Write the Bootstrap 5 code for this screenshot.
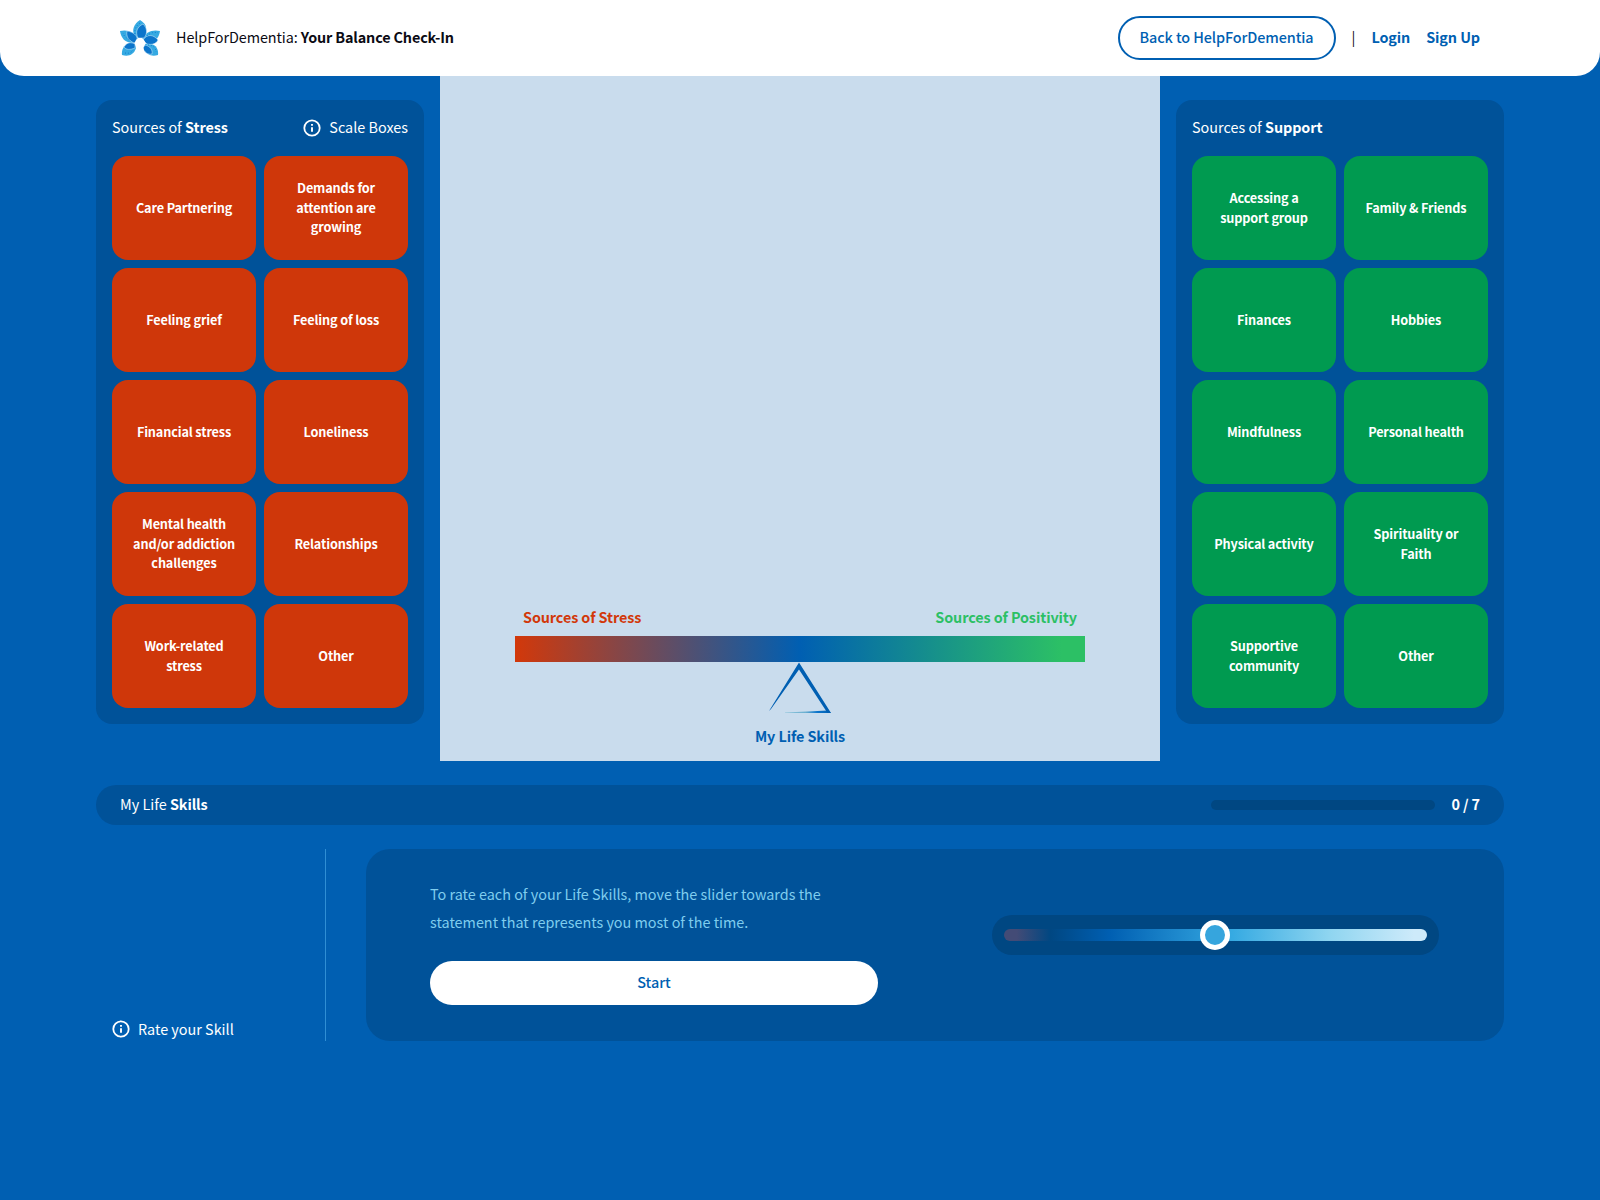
<!DOCTYPE html>
<html lang="en">

<head>
    <meta charset="UTF-8">
    <meta name="viewport" content="width=device-width, initial-scale=1">
    <title>HelpForDementia: Your Balance Check-In</title>
    <link href="https://cdn.jsdelivr.net/npm/bootstrap@5.3.3/dist/css/bootstrap.min.css" rel="stylesheet">
    <style>
        body {
            font-family: "Noto Sans CJK SC", "Noto Sans", sans-serif;
            font-size: 14.4px;
            line-height: 24px;
            background: #005fb2;
            color: #fff;
        }

        button {
            font-family: inherit;
        }

        strong,
        .fw-bold {
            letter-spacing: -.1px;
        }

        /* the font sits low in its line box */
        .lift {
            padding-bottom: 2px;
        }

        .site-header {
            height: 76px;
            padding: 0 120px;
            border-radius: 0 0 24px 24px;
            background: #fff;
            color: #0b0b14;
        }

        .site-title {
            letter-spacing: -.08px;
        }

        .site-title strong {
            letter-spacing: -.14px;
        }

        .site-header a {
            color: #005fb2;
            text-decoration: none;
        }

        .site-header .back-btn {
            width: 218px;
            height: 44px;
            border: 2px solid #005fb2;
            font-weight: 500;
            letter-spacing: -.1px;
        }

        .page-wrap {
            width: 1408px;
        }

        .source-panel {
            width: 328px;
            height: 624px;
            margin-top: 24px;
            padding: 16px;
            border-radius: 16px;
            background: #005299;
        }

        .source-title {
            height: 24px;
            margin-bottom: 16px;
        }

        .box-grid {
            display: grid;
            grid-template-columns: 144px 144px;
            grid-auto-rows: 104px;
            gap: 8px;
        }

        .source-box {
            padding: 0 16px 1px;
            border: 0;
            border-radius: 16px;
            color: #fff;
            font-size: 12.7px;
            line-height: 19.6px;
            font-weight: 700;
            letter-spacing: -.15px;
        }

        .stress .source-box {
            background: #cf370a;
        }

        .support .source-box {
            background: #009a50;
        }

        .scale-area {
            width: 720px;
            height: 685px;
            padding: 529px 75px 0;
            background: #c9dced;
        }

        .balance-bar {
            height: 26px;
            margin-top: 7px;
            background: linear-gradient(90deg, #d2380a, #005fb2 50%, #2cc065 96%);
        }

        .text-stress {
            color: #d2380a;
        }

        .text-positive {
            color: #2cc065;
        }

        .text-skill {
            margin-top: 11px;
            color: #005fb2;
        }

        .skills-bar {
            height: 40px;
            margin-top: 24px;
            padding: 0 24px;
            background: #005299;
        }

        .skills-bar .progress {
            width: 224px;
            height: 10px;
            border-radius: 5px;
            background: #004782;
        }

        .rate-side {
            width: 230px;
            padding-left: 16px;
            border-right: 1px solid #2f8ed4;
        }

        .rate-side .lift {
            margin-bottom: -2px;
        }

        .rate-row {
            height: 192px;
            margin-top: 24px;
        }

        .rate-panel {
            width: 1138px;
            padding: 0 65px 0 64px;
            border-radius: 24px;
            background: #005299;
        }

        .rate-copy {
            width: 448px;
            padding-top: 31px;
        }

        .rate-text {
            margin-bottom: 25px;
            color: #7fcdee;
            line-height: 28px;
        }

        .start-btn {
            height: 44px;
            padding: 0 0 2px;
            border: 0;
            background: #fff;
            color: #005fb2;
            font-weight: 500;
        }

        .rate-slider {
            width: 447px;
            height: 40px;
            margin-top: 66px;
            padding: 0 12px;
            background: #004782;
        }

        .rate-slider input {
            appearance: none;
            display: block;
            width: 100%;
            height: 12px;
            margin: 0;
            border-radius: 6px;
            background: linear-gradient(90deg, #434b76 3%, #004782 11%, #005fb2 25%, #36aae2 54%, #8fd5f0 77%, #cdeafa 97%);
        }

        .rate-slider input::-webkit-slider-thumb {
            appearance: none;
            width: 30px;
            height: 30px;
            border: 5px solid #fff;
            border-radius: 50%;
            background: #36a5dd;
        }
    </style>
</head>

<body>

    <svg class="d-none">
        <symbol id="info" viewBox="0 0 18 18">
            <circle cx="9" cy="9" r="7.7" fill="none" stroke="currentColor" stroke-width="1.8" />
            <path d="M9 8.2v4.6M9 5v1.8" stroke="currentColor" stroke-width="1.9" />
        </symbol>
    </svg>

    <header class="site-header d-flex align-items-center">
        <svg width="40" height="36" viewBox="0 0 40 36">
            <g fill="#36aae2">
                <path d="M20 0C14 4 11 10 15 17L21 18C29 11 27 4 20 0z" />
                <path d="M0 11C7 9 15 12 18 19L13 23C5 23 1 18 0 11z" />
                <path d="M40 11C33 9 25 12 22 19L27 23C35 23 39 18 40 11z" />
                <path d="M2 35C1 28 6 22 15 24L16 28C14 35 8 37 2 35z" />
                <path d="M38 35C39 28 34 22 25 24L24 28C26 35 32 37 38 35z" />
            </g>
            <g fill="#0c75cb" stroke="#d8effa" stroke-width=".5">
                <path d="M23 4C17 7 15 12 18 18L24 18C28 13 27 8 23 4z" />
                <path d="M7 11C13 12 18 15 17 21L14 23C8 20 6 16 7 11z" />
                <path d="M38 20C33 14 27 14 23 20L27 24C32 25 36 24 38 20z" />
                <path d="M4 27C7 22 11 22 15 24L15 28C10 30 6 30 4 27z" />
                <path d="M32 34C33 30 30 26 25 25L23 28C24 32 28 35 32 34z" />
            </g>
            <g fill="none" stroke="#0c75cb" stroke-width=".9" stroke-dasharray=".9 2">
                <path d="M15 14C14 9 17 5 20 3M12 20C6 19 4 16 3 13M27 16C31 12 35 12 38 13M5 33C9 34 12 32 13 30M28 25C33 25 36 28 36 32" />
            </g>
            <circle cx="20" cy="23" r="5" fill="#fff" />
            <path d="M17 26h6l2 10h-10z" fill="#fff" />
        </svg>
        <div class="site-title lift ms-3">HelpForDementia: <strong>Your Balance Check-In</strong></div>
        <nav class="d-flex align-items-center gap-3 ms-auto">
            <a href="#" class="back-btn lift rounded-pill d-flex align-items-center justify-content-center">Back to HelpForDementia</a>
            <span class="lift">|</span>
            <a href="#" class="lift fw-bold">Login</a>
            <a href="#" class="lift fw-bold">Sign Up</a>
        </nav>
    </header>

    <main class="page-wrap mx-auto">
        <div class="d-flex gap-3 align-items-start">
            <section class="source-panel stress">
                <div class="source-title d-flex align-items-center justify-content-between">
                    <span class="lift">Sources of <strong>Stress</strong></span>
                    <span class="d-flex align-items-center gap-2"><svg width="18" height="18"><use href="#info" /></svg><span class="lift">Scale Boxes</span></span>
                </div>
                <div class="box-grid">
                    <button class="source-box">Care Partnering</button>
                    <button class="source-box">Demands for attention are growing</button>
                    <button class="source-box">Feeling grief</button>
                    <button class="source-box">Feeling of loss</button>
                    <button class="source-box">Financial stress</button>
                    <button class="source-box">Loneliness</button>
                    <button class="source-box">Mental health and/or addiction challenges</button>
                    <button class="source-box">Relationships</button>
                    <button class="source-box">Work-related stress</button>
                    <button class="source-box">Other</button>
                </div>
            </section>

            <section class="scale-area">
                <div class="d-flex justify-content-between px-2">
                    <span class="text-stress fw-bold">Sources of Stress</span>
                    <span class="text-positive fw-bold">Sources of Positivity</span>
                </div>
                <div class="balance-bar"></div>
                <svg class="d-block mx-auto" width="64" height="51" viewBox="0 0 64 51">
                    <defs>
                        <linearGradient id="base">
                            <stop offset="0" stop-color="#8fc5da" />
                            <stop offset=".45" stop-color="#6aafd0" />
                            <stop offset=".7" stop-color="#0c75cb" />
                            <stop offset="1" stop-color="#005fb2" />
                        </linearGradient>
                    </defs>
                    <path d="M17 50.5L60 48.5L63 51L17 51z" fill="url(#base)" />
                    <path d="M31 .5L63 51H59.500L31 7.500L3 47L1 49z" fill="#005fb2" />
                </svg>
                <div class="text-skill fw-bold text-center">My Life Skills</div>
            </section>

            <section class="source-panel support">
                <div class="source-title d-flex align-items-center">
                    <span class="lift">Sources of <strong>Support</strong></span>
                </div>
                <div class="box-grid">
                    <button class="source-box">Accessing a support group</button>
                    <button class="source-box">Family &amp; Friends</button>
                    <button class="source-box">Finances</button>
                    <button class="source-box">Hobbies</button>
                    <button class="source-box">Mindfulness</button>
                    <button class="source-box">Personal health</button>
                    <button class="source-box">Physical activity</button>
                    <button class="source-box">Spirituality or Faith</button>
                    <button class="source-box">Supportive community</button>
                    <button class="source-box">Other</button>
                </div>
            </section>
        </div>

        <div class="skills-bar rounded-pill d-flex align-items-center">
            <span class="lift">My Life <strong>Skills</strong></span>
            <div class="progress ms-auto me-3"></div>
            <strong class="lift">0 / 7</strong>
        </div>

        <div class="rate-row d-flex justify-content-between">
            <div class="rate-side d-flex align-items-end">
                <span class="d-flex align-items-center gap-2"><svg width="18" height="18"><use href="#info" /></svg><span class="lift">Rate your Skill</span></span>
            </div>
            <section class="rate-panel d-flex justify-content-between">
                <div class="rate-copy">
                    <p class="rate-text">To rate each of your Life Skills, move the slider towards the statement that represents you most of the time.</p>
                    <button class="start-btn rounded-pill w-100">Start</button>
                </div>
                <div class="rate-slider rounded-pill d-flex align-items-center">
                    <input type="range" min="0" max="100" step=".1" value="49.8">
                </div>
            </section>
        </div>
    </main>

    <script src="https://cdn.jsdelivr.net/npm/bootstrap@5.3.3/dist/js/bootstrap.bundle.min.js"></script>
</body>

</html>
